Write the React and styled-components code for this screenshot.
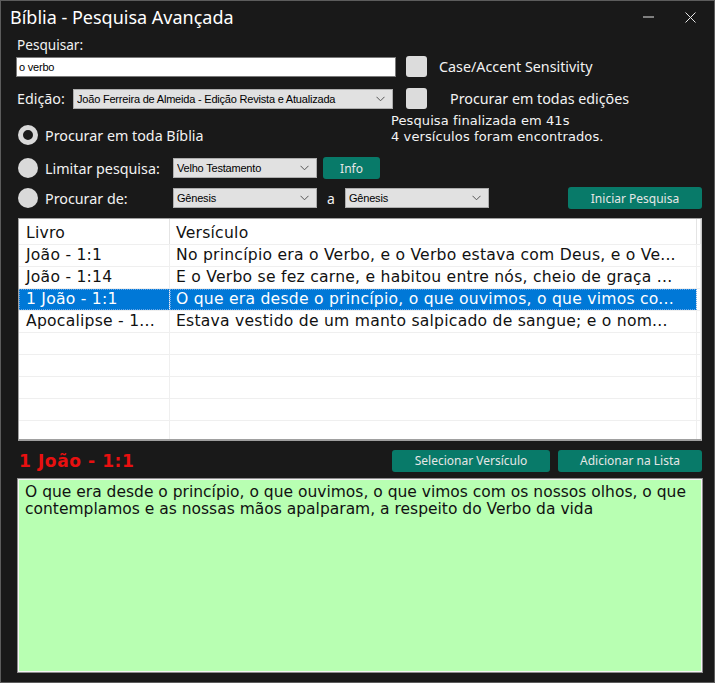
import React from "react";
import styled, { createGlobalStyle } from "styled-components";

const GlobalStyle = createGlobalStyle`
  html, body {
    margin: 0;
    padding: 0;
    background: #191919;
  }
  * {
    box-sizing: border-box;
  }
`;

const UI = `"Noto Sans", "Open Sans", sans-serif`;
const VERDANA = `"DejaVu Sans", "Bitstream Vera Sans", sans-serif`;
const SMALL = `"Liberation Sans", Arial, sans-serif`;

const Window = styled.div`
  width: 715px;
  height: 683px;
  border: 1px solid #5c5c5c;
  background: #191919;
  display: flex;
  flex-direction: column;
  color: #f2f2f2;
  font-family: ${UI};
  overflow: hidden;
`;

const TitleBar = styled.div`
  height: 32px;
  display: flex;
  align-items: center;
  padding-left: 9px;
  padding-right: 3px;
`;

const Title = styled.div`
  font-size: 18px;
  color: #ffffff;
  flex: 1;
`;

const WinButton = styled.div`
  width: 42px;
  height: 32px;
  display: flex;
  align-items: center;
  justify-content: center;
`;

const Body = styled.div`
  flex: 1;
  display: flex;
  flex-direction: column;
  padding: 0 12px 10px 16px;
`;

const FieldLabel = styled.div`
  margin-top: 2px;
  font-size: 13.6px;
  line-height: 20px;
  height: 20px;
`;

const Row = styled.div`
  display: flex;
  align-items: center;
  height: ${(p) => p.$h || 23}px;
  margin-top: ${(p) => p.$mt || 0}px;
`;

const TextInput = styled.div`
  width: 380px;
  height: 20px;
  margin-left: -1px;
  background: #ffffff;
  border: 1px solid #7a7a7a;
  color: #000;
  font-family: ${SMALL};
  font-size: 11px;
  letter-spacing: -0.2px;
  line-height: 18px;
  padding-left: 2px;
`;

const CheckBox = styled.div`
  width: 21px;
  height: 21px;
  border-radius: 3px;
  background: #dcdcdc;
  margin-left: ${(p) => p.$ml}px;
  flex-shrink: 0;
`;

const OptionText = styled.span`
  font-size: 14.3px;
  margin-left: ${(p) => p.$ml || 0}px;
  white-space: nowrap;
`;

const InlineLabel = styled.span`
  font-size: 14.3px;
  width: ${(p) => p.$w}px;
  flex-shrink: 0;
`;

const Select = styled.div`
  width: ${(p) => p.$w}px;
  height: 20px;
  background: #e1e1e1;
  border: 1px solid #adadad;
  display: flex;
  align-items: center;
  color: #000;
  font-family: ${SMALL};
  font-size: 11px;
  letter-spacing: -0.2px;
  padding: 0 7px 0 3px;
  flex-shrink: 0;
  span {
    flex: 1;
    white-space: nowrap;
    overflow: hidden;
  }
`;

const StatusRow = styled.div`
  display: flex;
  align-items: flex-end;
  height: 33px;
  margin-top: 3px;
`;

const StatusText = styled.div`
  font-family: ${VERDANA};
  font-size: 13px;
  line-height: 16px;
  color: #f4f4f4;
  align-self: flex-start;
  white-space: nowrap;
  letter-spacing: 0.1px;
`;

const RadioOption = styled.div`
  display: flex;
  align-items: center;
  height: 22px;
  width: 374px;
  padding-left: 1px;
`;

const Radio = styled.div`
  width: 20px;
  height: 20px;
  border-radius: 50%;
  flex-shrink: 0;
  background: ${(p) => (p.$checked ? "#1a1a1a" : "#d9d9d9")};
  border: ${(p) => (p.$checked ? "5px solid #d9d9d9" : "none")};
  margin-left: ${(p) => p.$ml || 0}px;
  margin-right: 7px;
`;

const TealButton = styled.div`
  width: ${(p) => p.$w}px;
  height: 22px;
  margin-left: ${(p) => (p.$ml === "auto" ? "auto" : `${p.$ml || 0}px`)};
  background: #087a69;
  border-radius: 3px;
  color: #e6e6e6;
  font-size: 12px;
  display: flex;
  align-items: center;
  justify-content: center;
  flex-shrink: 0;
`;

const Sep = styled.span`
  font-size: 14px;
  margin: 0 10px;
  width: 8px;
`;

const List = styled.div`
  margin-top: 9px;
  margin-left: 1px;
  height: 223px;
  background: #ffffff;
  border: 1px solid #a0a0a0;
  border-bottom-width: 2px;
  border-right-color: #c8c8c8;
  font-family: ${VERDANA};
  font-size: 15.6px;
  letter-spacing: 0.24px;
  color: #111;
  overflow: hidden;
`;

const ListRow = styled.div`
  display: grid;
  grid-template-columns: 151px 527px 1fr;
  height: ${(p) => p.$h || 22}px;
  border-bottom: 1px solid #efefef;
`;

const Cell = styled.div`
  padding-left: ${(p) => p.$pl}px;
  border-right: 1px solid ${(p) => (p.$head ? "#e4e4e4" : "#efefef")};
  white-space: nowrap;
  overflow: hidden;
  line-height: 21px;
  padding-top: ${(p) => (p.$head ? 4 : 0)}px;
  background: ${(p) => (p.$sel ? "#0078d7" : "transparent")};
  color: ${(p) => (p.$sel ? "#ffffff" : "inherit")};
  outline: ${(p) => (p.$sel ? "1px dotted #6aa8e8" : "none")};
  outline-offset: -1px;
`;

const BottomRow = styled.div`
  display: flex;
  align-items: center;
  height: 23px;
  margin-top: 8px;
`;

const Reference = styled.div`
  font-family: ${VERDANA};
  font-weight: bold;
  font-size: 17px;
  letter-spacing: 0.6px;
  color: #e81010;
  margin-left: 2px;
  flex: 1;
`;

const VerseBox = styled.div`
  flex: 1;
  margin-top: 7px;
  margin-left: 1px;
  background: #b8ffb2;
  border: 1px solid #f4f4f4;
  box-shadow: 0 0 0 1px #8c8c8c;
  color: #111;
  font-family: ${VERDANA};
  font-size: 15.5px;
  line-height: 17px;
  padding: 4px 5px 4px 6px;
`;

const Chevron = () => (
  <svg width="9" height="6" viewBox="0 0 9 6">
    <polyline points="0.5,0.8 4.5,4.8 8.5,0.8" fill="none" stroke="#555" strokeWidth="1" />
  </svg>
);

const Dropdown = ({ w, children }) => (
  <Select $w={w}>
    <span>{children}</span>
    <Chevron />
  </Select>
);

const rows = [
  ["João - 1:1", "No princípio era o Verbo, e o Verbo estava com Deus, e o Ve..."],
  ["João - 1:14", "E o Verbo se fez carne, e habitou entre nós, cheio de graça ..."],
  ["1 João - 1:1", "O que era desde o princípio, o que ouvimos, o que vimos co...", true],
  ["Apocalipse - 1...", "Estava vestido de um manto salpicado de sangue; e o nom..."],
];

const App = () => (
  <>
    <GlobalStyle />
    <Window>
      <TitleBar>
        <Title>Bíblia - Pesquisa Avançada</Title>
        <WinButton>
          <svg width="11" height="2" viewBox="0 0 11 2">
            <line x1="0" y1="1" x2="11" y2="1" stroke="#e6e6e6" strokeWidth="1" />
          </svg>
        </WinButton>
        <WinButton>
          <svg width="11" height="11" viewBox="0 0 11 11">
            <path d="M0.5 0.5 L10.5 10.5 M10.5 0.5 L0.5 10.5" stroke="#e6e6e6" strokeWidth="1" />
          </svg>
        </WinButton>
      </TitleBar>
      <Body>
        <FieldLabel>Pesquisar:</FieldLabel>
        <Row>
          <TextInput>o verbo</TextInput>
          <CheckBox $ml={10} />
          <OptionText $ml={12}>Case/Accent Sensitivity</OptionText>
        </Row>
        <Row $mt={9}>
          <InlineLabel $w={56}>Edição:</InlineLabel>
          <Dropdown w={320}>João Ferreira de Almeida - Edição Revista e Atualizada</Dropdown>
          <CheckBox $ml={13} />
          <OptionText $ml={23}>Procurar em todas edições</OptionText>
        </Row>
        <StatusRow>
          <RadioOption>
            <Radio $checked />
            <OptionText>Procurar em toda Bíblia</OptionText>
          </RadioOption>
          <StatusText>
            Pesquisa finalizada em 41s
            <br />4 versículos foram encontrados.
          </StatusText>
        </StatusRow>
        <Row $h={22} $mt={11}>
          <Radio $ml={1} />
          <InlineLabel $w={128}>Limitar pesquisa:</InlineLabel>
          <Dropdown w={144}>Velho Testamento</Dropdown>
          <TealButton $w={57} $ml={6}>Info</TealButton>
        </Row>
        <Row $h={22} $mt={8}>
          <Radio $ml={1} />
          <InlineLabel $w={128}>Procurar de:</InlineLabel>
          <Dropdown w={144}>Gênesis</Dropdown>
          <Sep>a</Sep>
          <Dropdown w={144}>Gênesis</Dropdown>
          <TealButton $w={134} $ml="auto">Iniciar Pesquisa</TealButton>
        </Row>
        <List>
          <ListRow $h={26}>
            <Cell $head $pl={7}>Livro</Cell>
            <Cell $head $pl={6}>Versículo</Cell>
            <Cell $head $pl={0} />
          </ListRow>
          {rows.map(([book, verse, sel]) => (
            <ListRow key={book}>
              <Cell $pl={7} $sel={sel}>{book}</Cell>
              <Cell $pl={6} $sel={sel}>{verse}</Cell>
              <Cell $pl={0} />
            </ListRow>
          ))}
          {[0, 1, 2, 3, 4].map((i) => (
            <ListRow key={i}>
              <Cell $pl={7} />
              <Cell $pl={6} />
              <Cell $pl={0} />
            </ListRow>
          ))}
        </List>
        <BottomRow>
          <Reference>1 João - 1:1</Reference>
          <TealButton $w={158}>Selecionar Versículo</TealButton>
          <TealButton $w={144} $ml={8}>Adicionar na Lista</TealButton>
        </BottomRow>
        <VerseBox>
          O que era desde o princípio, o que ouvimos, o que vimos com os nossos olhos, o que
          contemplamos e as nossas mãos apalparam, a respeito do Verbo da vida
        </VerseBox>
      </Body>
    </Window>
  </>
);

export default App;
